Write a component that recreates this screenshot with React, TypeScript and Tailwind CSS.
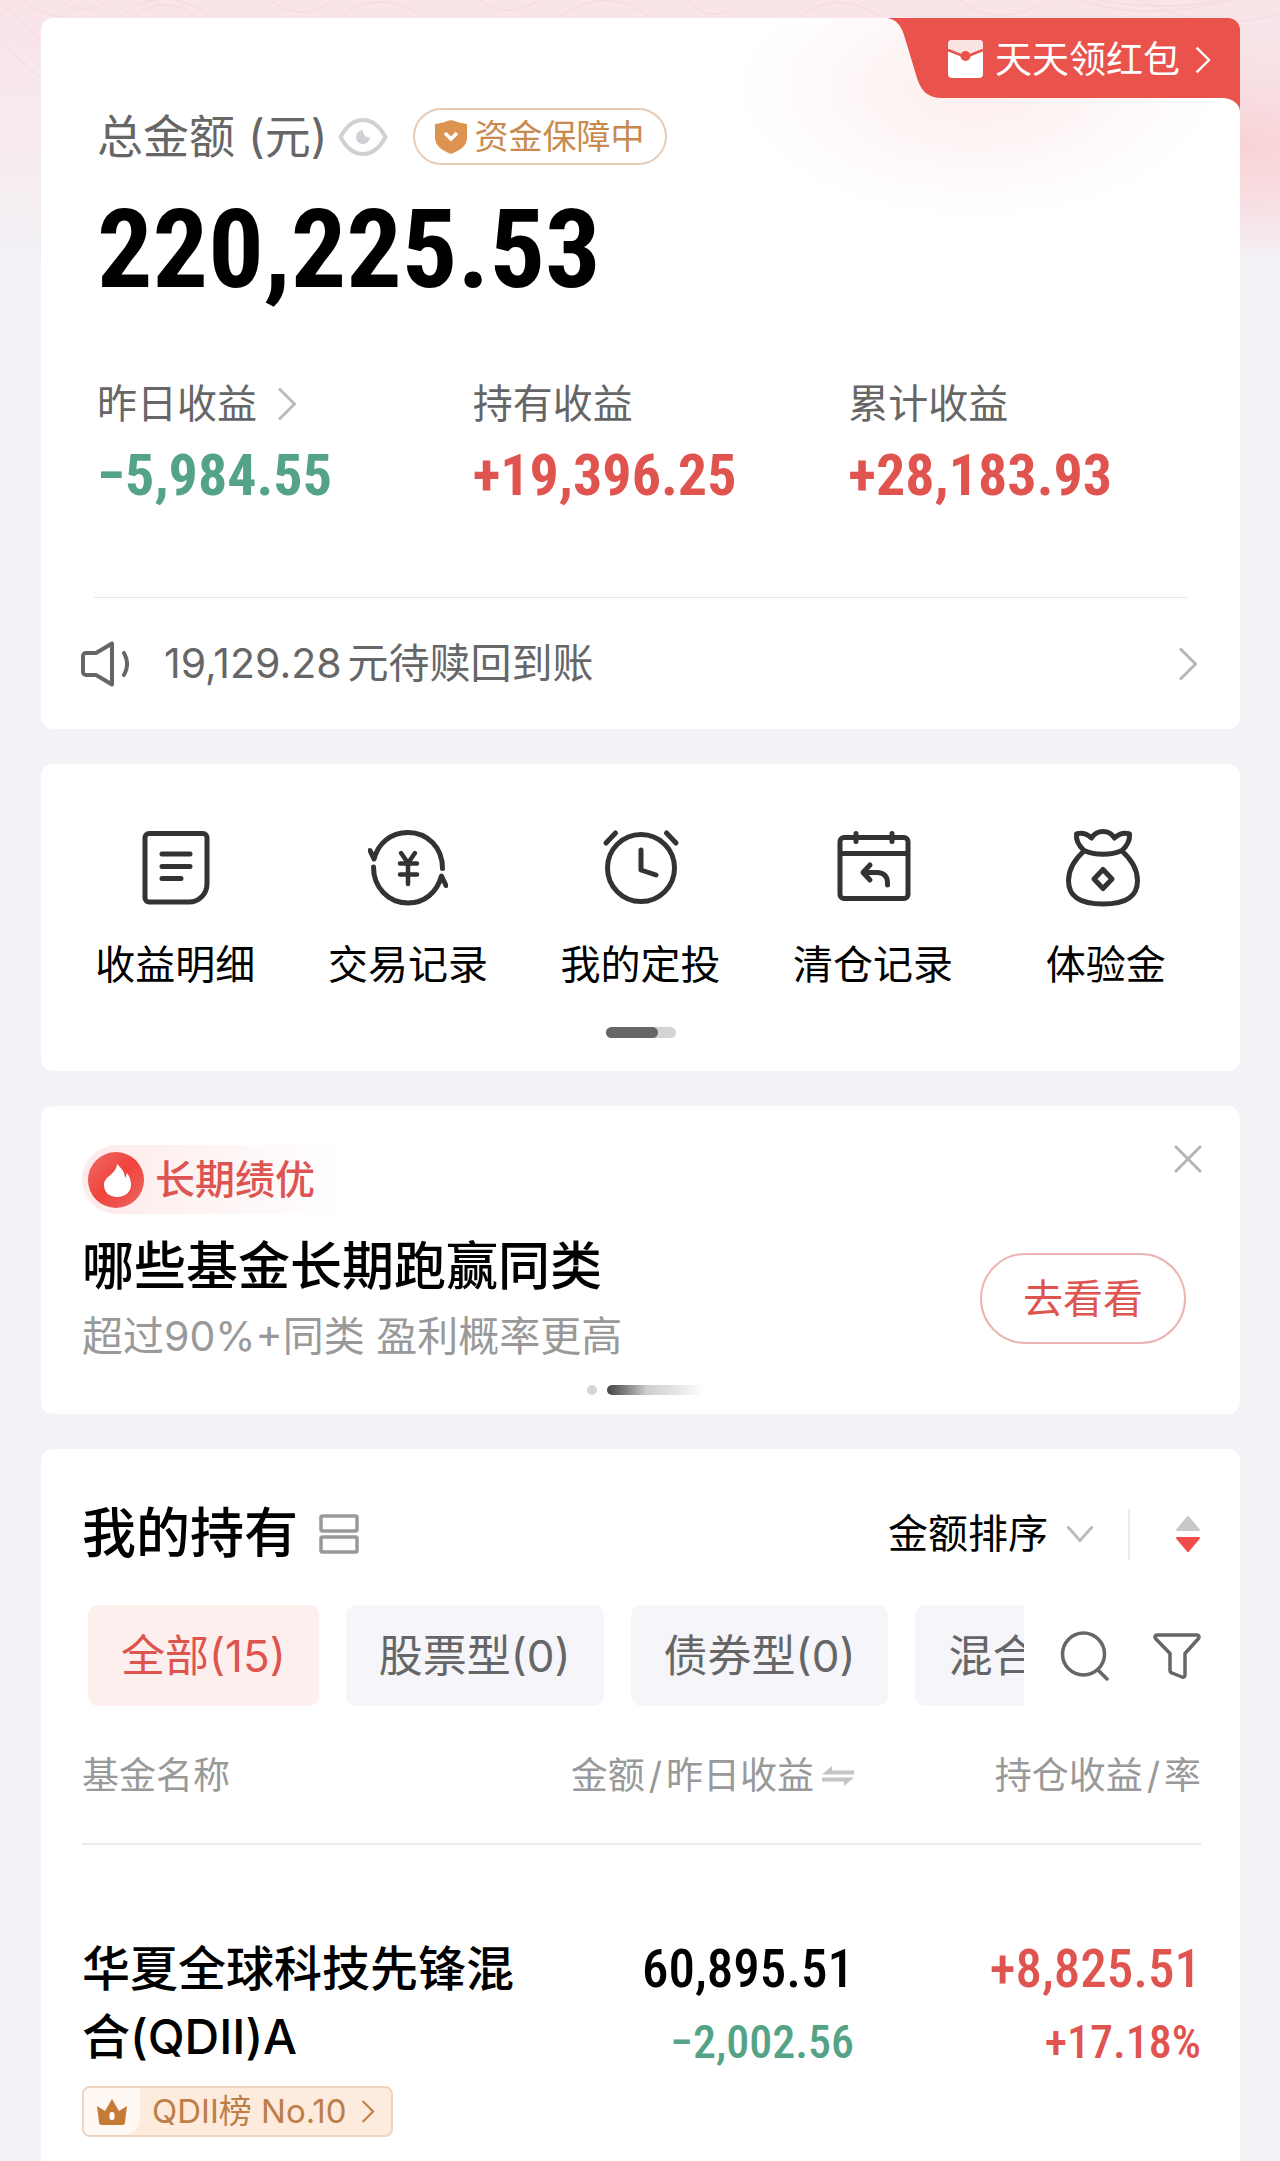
import React from 'react';

interface Stat {
  label: string;
  value: string;
  up: boolean;
  link?: boolean;
}

interface Shortcut {
  label: string;
  icon: React.ReactNode;
}

interface Holding {
  name: string;
  rank: string;
  amount: string;
  dayChange: string;
  profit: string;
  rate: string;
}

const STATS: Stat[] = [
  { label: '昨日收益', value: '−5,984.55', up: false, link: true },
  { label: '持有收益', value: '+19,396.25', up: true },
  { label: '累计收益', value: '+28,183.93', up: true },
];

const TABS = ['全部(15)', '股票型(0)', '债券型(0)', '混合型(0)'];

const HOLDINGS: Holding[] = [
  {
    name: '华夏全球科技先锋混合(QDII)A',
    rank: 'QDII榜 No.10',
    amount: '60,895.51',
    dayChange: '−2,002.56',
    profit: '+8,825.51',
    rate: '+17.18%',
  },
];

const Chevron: React.FC<{ className: string }> = ({ className }) => (
  <svg viewBox="0 0 20 34" fill="none" stroke="currentColor" strokeWidth="3" className={className} aria-hidden="true">
    <path d="M2 1.5 17.500 17 2 32.500" />
  </svg>
);

const ShortcutIcon: React.FC<{ children: React.ReactNode }> = ({ children }) => (
  <svg
    viewBox="0 0 80 80"
    fill="none"
    stroke="#333"
    strokeWidth="5"
    strokeLinecap="round"
    strokeLinejoin="round"
    className="size-20"
    aria-hidden="true"
  >
    {children}
  </svg>
);

const SHORTCUTS: Shortcut[] = [
  {
    label: '收益明细',
    icon: (
      <ShortcutIcon>
        <path d="M14 5.500h54a4 4 0 0 1 4 4V56a18 18 0 0 1-18 18H14a4 4 0 0 1-4-4V9.500a4 4 0 0 1 4-4Z" />
        <path d="M27 26h28M27 38.500h28M27 50.500h19" />
      </ShortcutIcon>
    ),
  },
  {
    label: '交易记录',
    icon: (
      <ShortcutIcon>
        <path d="M2 22.500 6 31C10 16 22 4.500 40 4.500c20 0 34.500 15.500 34.500 36" />
        <path d="M78 57.500 73.500 48C69 64 57 75 40 75 20 75 5.500 59 5.500 39" />
        <path d="M33 25l7 10 7-10M32 35.500h17M32 46.500h17M40 35v21" strokeWidth="4.500" />
      </ShortcutIcon>
    ),
  },
  {
    label: '我的定投',
    icon: (
      <ShortcutIcon>
        <circle cx="41" cy="40" r="33.500" />
        <path d="M41 22v20l15 5" />
        <path d="M6 15 15.500 5M76 15 66.500 5" />
      </ShortcutIcon>
    ),
  },
  {
    label: '清仓记录',
    icon: (
      <ShortcutIcon>
        <rect x="7" y="9.500" width="68" height="61" rx="4" />
        <path d="M8 25.500h66M23 5.500v8M59 5.500v8" />
        <path d="M37 37l-7 7.500 7 7.500M31 44.500h13c7 0 10.500 4 10.500 10.500V57" />
      </ShortcutIcon>
    ),
  },
  {
    label: '体验金',
    icon: (
      <ShortcutIcon>
        <path d="M18 22.500C12 17 10 11 10.500 6c5-1.500 10-.5 15 4 3-5 7-6.500 11.500-6.500S45.500 5 48.500 10c5-4.500 10-5.500 15-4 .5 5-1.500 11-7.500 16.500-11 5-27 5-38 0Z" />
        <path d="M18 23C7 33 2.500 43 2.500 52.500 2.500 68 13 76 37 76s34.500-8 34.500-23.500C71.500 43 67 33 56 23" />
        <path d="M37 41.500 46 51l-9 9.500L28 51Z" />
      </ShortcutIcon>
    ),
  },
];

const Backdrop: React.FC = () => (
  <div className="absolute inset-x-0 top-0 h-[270px] bg-linear-to-b from-[#f9e4e8] via-[#f7eaee] to-[#f2f2f7]">
    <div className="absolute top-0 right-0 h-[270px] w-[420px] bg-[radial-gradient(ellipse_240px_115px_at_92%_54%,#f8d2d5_0%,#f8dce0_40%,transparent_100%)]" />
    <svg viewBox="0 0 1280 90" fill="none" stroke="#eed3da" className="absolute inset-x-0 top-0 w-full opacity-60" aria-hidden="true">
      <path d="M0 14 40 52M0 28l40 38M0 42l40 36M0 2l44 40M24 0c10 10 22 16 40 17M60 0c14 12 34 12 48 0M120 17c30-24 60-24 90 0M134 17c20-16 42-16 62 0M270 0c20 16 44 16 64 0M340 17c26-20 56-20 82 0M480 0c16 14 40 14 58 0M560 17c30-22 60-22 90 0M690 0c10 20 40 18 50 0M800 17c30-24 60-14 80 0M960 0c30 24 60 16 90 0M1080 0c40 14 90 16 150 0M1100 0c40 8 90 8 120 0M1140 0c60 28 100 24 140 14" />
    </svg>
  </div>
);

const RedPacketLink: React.FC = () => (
  <a
    href="#red-packet"
    className="absolute top-0 right-0 flex h-[94px] w-[352px] pb-[11px] pl-[60px] text-[37px] text-white"
  >
    <svg viewBox="0 0 352 94" className="absolute inset-0" aria-hidden="true">
      <path
        d="M4 0h336a12 12 0 0 1 12 12v82a18 14 0 0 0-18-14H54C40 80 33 73 29 60L16 17C13 7 8 2 0 0Z"
        fill="#ea524c"
      />
      <rect x="60" y="22" width="35" height="38" rx="4" fill="#fff" />
      <path d="M60 26a4 4 0 0 1 4-4h27a4 4 0 0 1 4 4v6L80 38c-2 1-4 1-6 0l-14-6Z" fill="#fbe3e2" />
      <path d="M60 32 75 38h5l15-6" fill="none" stroke="#ea524c" strokeWidth="2.500" />
      <circle cx="77.500" cy="38" r="5" fill="#ea524c" />
    </svg>
    <span className="relative flex flex-1 items-center gap-[15px] pl-[47px]">
      天天领红包
      <Chevron className="h-7 w-4" />
    </span>
  </a>
);

const AssetCard: React.FC = () => (
  <section className="relative rounded-xl bg-white bg-[radial-gradient(ellipse_240px_130px_at_78%_70px,#fdeeee_0%,#fff_100%)]">
    <RedPacketLink />
    <div className="pt-[90px] pr-4 pl-14">
      <div className="flex items-center">
        <h1 className="text-[46px] leading-[57px] text-[#666]">总金额 (元)</h1>
        <button type="button" aria-label="隐藏金额" className="ml-2.5">
          <svg viewBox="0 0 50 40" fill="none" className="h-10 w-[50px]" aria-hidden="true">
            <path d="M2.500 20C9 8 16 3 25 3s16 5 22.500 17C41 32 34 37 25 37S9 32 2.500 20Z" stroke="#d0d0d5" strokeWidth="4" strokeLinejoin="round" />
            <path d="M25 13a7 7 0 1 0 7 7c-4 1-7-2-7-7Z" fill="#d0d0d5" />
          </svg>
        </button>
        <a
          href="#guarantee"
          className="ml-[25px] flex h-[57px] items-center rounded-full border-2 border-[#e6cdb8] px-5 text-[34px] text-[#c98a50]"
        >
          <svg viewBox="0 0 32 34" className="mr-2 h-[34px] w-8" aria-hidden="true">
            <path d="M0 4C6 3 10 2 16 0c6 2 10 3 16 4v14c0 8-8 13-16 16C8 31 0 26 0 18Z" fill="#dd9450" />
            <path d="m10 13 6 6 6-6" fill="none" stroke="#fff" strokeWidth="3.500" />
          </svg>
          资金保障中
        </a>
      </div>
      <p className="mt-[35px] font-['Roboto_Condensed','Roboto'] text-[110px] leading-[100px] font-bold text-black">
        220,225.53
      </p>
      <dl className="mt-20 grid grid-cols-3">
        {STATS.map((stat) => (
          <div key={stat.label}>
            <dt className="flex items-center gap-5 text-[40px] leading-[48px] text-[#666]">
              {stat.label}
              {stat.link && <Chevron className="h-[34px] w-5 text-[#bbb]" />}
            </dt>
            <dd
              className={
                stat.up
                  ? "mt-[19px] font-['Roboto_Condensed','Roboto'] text-[58px] leading-[56px] font-bold text-[#e05450]"
                  : "mt-[19px] font-['Roboto_Condensed','Roboto'] text-[58px] leading-[56px] font-bold text-[#55a387]"
              }
            >
              {stat.value}
            </dd>
          </div>
        ))}
      </dl>
    </div>
    <div className="mt-[94px] mr-[53px] ml-[53px] h-px bg-[#e6e6e6]" />
    <a href="#pending" className="mr-[42px] ml-10 flex h-[131px] items-center text-[41px] text-[#666]">
      <svg viewBox="0 0 50 46" fill="none" stroke="#666" strokeWidth="4" strokeLinejoin="round" strokeLinecap="round" className="mr-[33px] h-[46px] w-[50px]" aria-hidden="true">
        <path d="M5 12h10L31 2.500v41L15 34H5a3 3 0 0 1-3-3V15a3 3 0 0 1 3-3Z" />
        <path d="M43 12c4 7 4 15 0 22" />
      </svg>
      <span className="flex flex-1 gap-1.5">
        <span>19,129.28</span>
        <span>元待赎回到账</span>
      </span>
      <Chevron className="h-[34px] w-5 text-[#b8b8b8]" />
    </a>
  </section>
);

const ShortcutCard: React.FC = () => (
  <nav className="rounded-xl bg-white px-[18px] pt-16 pb-[33px]">
    <ul className="grid grid-cols-5">
      {SHORTCUTS.map((item) => (
        <li key={item.label}>
          <a href="#shortcut" className="flex flex-col items-center gap-[33px] text-[40px] leading-[48px] text-black">
            {item.icon}
            {item.label}
          </a>
        </li>
      ))}
    </ul>
    <div className="mx-auto mt-[38px] h-[11px] w-[70px] rounded-full bg-[#d4d4d4]">
      <div className="h-full w-[52px] rounded-full bg-[#666]" />
    </div>
  </nav>
);

const PromoCard: React.FC = () => (
  <section className="rounded-xl bg-white pt-[39px] pr-[38px] pb-[19px] pl-[41px]">
    <div className="flex justify-between">
      <div>
        <div className="flex h-[69px] w-[264px] items-center gap-[11px] rounded-l-full bg-linear-to-r from-[#fdeaea] to-white pl-1.5 text-[40px] font-medium text-[#dd5552]">
          <svg viewBox="0 0 56 56" className="size-14" aria-hidden="true">
            <defs>
              <linearGradient id="flame-bg" x1="0" y1="0" x2="1" y2="1">
                <stop offset="0" stopColor="#ee6a66" />
                <stop offset="0.500" stopColor="#f0433c" />
                <stop offset="1" stopColor="#e86a66" />
              </linearGradient>
            </defs>
            <circle cx="28" cy="28" r="28" fill="url(#flame-bg)" />
            <path d="M29 12c5 5 8 8 8 14 1-1 1-3 2-5 3 4 4 8 4 12 0 7-6 12-14 12s-13-5-13-12c0-9 12-10 13-21Z" fill="#fff" />
          </svg>
          <span className="whitespace-nowrap">长期绩优</span>
        </div>
        <h2 className="mt-[21px] text-[52px] leading-[64px] font-medium text-black">哪些基金长期跑赢同类</h2>
        <p className="mt-[13px] text-[41px] leading-[48px] text-[#999]">超过90%+同类 盈利概率更高</p>
      </div>
      <div className="flex flex-col items-end">
        <button type="button" aria-label="关闭">
          <svg viewBox="0 0 28 28" stroke="#b5b5b5" strokeWidth="3" strokeLinecap="round" className="size-7" aria-hidden="true">
            <path d="m2 2 24 24M26 2 2 26" />
          </svg>
        </button>
        <button type="button" className="mt-20 mr-4 h-[91px] w-[206px] rounded-full border-2 border-[#ebb3b1] text-[40px] text-[#e05450]">
          去看看
        </button>
      </div>
    </div>
    <div className="mt-[25px] flex items-center justify-center gap-2.5 pl-2">
      <span className="size-2.5 rounded-full bg-[#d4d4d4]" />
      <span className="h-2.5 w-[98px] rounded-l-full bg-linear-to-r from-[#444] via-[#ccc] via-40% to-white" />
    </div>
  </section>
);

const HoldingRow: React.FC<{ item: Holding }> = ({ item }) => (
  <tr className="align-top">
    <td className="pt-[90px]">
      <p className="text-[48px] leading-[68px] font-medium break-all text-black">{item.name}</p>
      <a
        href="#rank"
        className="mt-[15px] inline-flex h-[51px] items-center rounded-lg border-2 border-[#eed3be] bg-[#fdebdd] pr-4 text-[33px] text-[#bd7f47]"
      >
        <span className="mr-3 flex h-full w-[56px] items-center justify-center rounded-l-md rounded-br-2xl bg-[#fff8f3]">
          <svg viewBox="0 0 30 26" className="h-[26px] w-[30px]" aria-hidden="true">
            <path d="m0 7 8 5 7-12 7 12 8-5-2 16c0 2-1 3-3 3H5c-2 0-3-1-3-3Z" fill="#c77b38" />
            <rect x="12.500" y="13" width="5" height="8" rx="2.500" fill="#fff" />
          </svg>
        </span>
        {item.rank}
        <Chevron className="ml-3.5 h-[23px] w-3.5" />
      </a>
    </td>
    <td className="pt-[90px] text-right font-['Roboto_Condensed','Roboto'] font-medium">
      <p className="text-[53px] leading-[68px] text-black">{item.amount}</p>
      <p className="text-[46px] leading-[78px] text-[#55a387]">{item.dayChange}</p>
    </td>
    <td className="pt-[90px] text-right font-['Roboto_Condensed','Roboto'] font-medium text-[#e05450]">
      <p className="text-[53px] leading-[68px]">{item.profit}</p>
      <p className="text-[46px] leading-[78px]">{item.rate}</p>
    </td>
  </tr>
);

const HoldingsCard: React.FC = () => (
  <section className="rounded-t-xl bg-white pt-[53px] pr-[39px] pb-[25px] pl-[41px]">
    <div className="flex items-center">
      <h2 className="text-[54px] leading-[64px] font-medium text-black">我的持有</h2>
      <button type="button" aria-label="切换视图" className="ml-[21px]">
        <svg viewBox="0 0 40 40" fill="none" stroke="#999" strokeWidth="3.500" className="size-10" aria-hidden="true">
          <rect x="2" y="2" width="36" height="15" rx="1.500" />
          <rect x="2" y="23" width="36" height="15" rx="1.500" />
        </svg>
      </button>
      <select
        aria-label="排序方式"
        className="ml-auto appearance-none bg-transparent text-[40px] leading-[48px] text-black"
      >
        <option>金额排序</option>
      </select>
      <svg viewBox="0 0 28 18" fill="none" stroke="#bbb" strokeWidth="3" className="ml-[18px] h-[18px] w-7" aria-hidden="true">
        <path d="m1.500 1.500 12.500 14 12.500-14" />
      </svg>
      <span className="ml-[34px] h-[51px] w-0.5 bg-[#ebebeb]" />
      <button type="button" aria-label="切换升降序" className="ml-[45px]">
        <svg viewBox="0 0 26 38" className="h-[38px] w-[26px]" strokeLinejoin="round" strokeWidth="2" aria-hidden="true">
          <path d="M13 2 24 15H2Z" fill="#c8c8c8" stroke="#c8c8c8" />
          <path d="M13 36 24 23H2Z" fill="#ef4d49" stroke="#ef4d49" />
        </svg>
      </button>
    </div>
    <div className="mt-[39px] flex items-center">
      <div className="flex min-w-0 flex-1 gap-[27px] overflow-hidden pl-1.5">
        {TABS.map((tab, i) => (
          <button
            key={tab}
            type="button"
            className={
              i === 0
                ? 'h-[101px] shrink-0 rounded-[10px] bg-[#fcefee] px-[33px] text-[44px] text-[#e05450]'
                : 'h-[101px] shrink-0 rounded-[10px] bg-[#f5f5fa] px-[33px] text-[44px] text-[#666]'
            }
          >
            {tab}
          </button>
        ))}
      </div>
      <button type="button" aria-label="搜索" className="ml-9">
        <svg viewBox="0 0 50 50" fill="none" stroke="#666" strokeWidth="3.500" strokeLinecap="round" className="size-[50px]" aria-hidden="true">
          <circle cx="23.500" cy="23" r="21" />
          <path d="m38 39 9 9" />
        </svg>
      </button>
      <button type="button" aria-label="筛选" className="ml-[43px]">
        <svg viewBox="0 0 48 48" fill="none" stroke="#666" strokeWidth="3.500" strokeLinejoin="round" className="size-12" aria-hidden="true">
          <path d="M4 3h40c2 0 2.500 2 1.500 3.500L32 21.500V43c0 2-1.500 2.500-3 2l-10-4c-1.500-.5-2-1.500-2-3V21.500L2.500 6.500C1.500 5 2 3 4 3Z" />
        </svg>
      </button>
    </div>
    <table className="mt-[46px] w-full table-fixed">
      <thead>
        <tr className="border-b-2 border-[#ebebeb] text-[37px] leading-[48px] text-[#999]">
          <th scope="col" className="w-[40%] pb-[43px] text-left font-normal">
            基金名称
          </th>
          <th scope="col" className="w-[29%] pb-[43px] font-normal">
            <span className="flex items-center justify-end gap-2 whitespace-nowrap">
              <span>
                金额<span className="mx-1">/</span>昨日收益
              </span>
              <svg viewBox="0 0 32 20" fill="#c4c4c4" className="h-5 w-8" aria-hidden="true">
                <path d="M10 0v4.500h22v4H0ZM22 20v-4.500H0v-4h32Z" />
              </svg>
            </span>
          </th>
          <th scope="col" className="w-[31%] pb-[43px] text-right font-normal">
            持仓收益<span className="mx-1">/</span>率
          </th>
        </tr>
      </thead>
      <tbody>
        {HOLDINGS.map((item) => (
          <HoldingRow key={item.name} item={item} />
        ))}
      </tbody>
    </table>
  </section>
);

export default function App() {
  return (
    <div className="relative bg-[#f2f2f7] font-['Inter','Noto_Sans_CJK_SC',sans-serif]">
      <Backdrop />
      <main className="relative flex flex-col gap-[35px] pt-[18px] pr-10 pl-[41px]">
        <AssetCard />
        <ShortcutCard />
        <PromoCard />
        <HoldingsCard />
      </main>
    </div>
  );
}
